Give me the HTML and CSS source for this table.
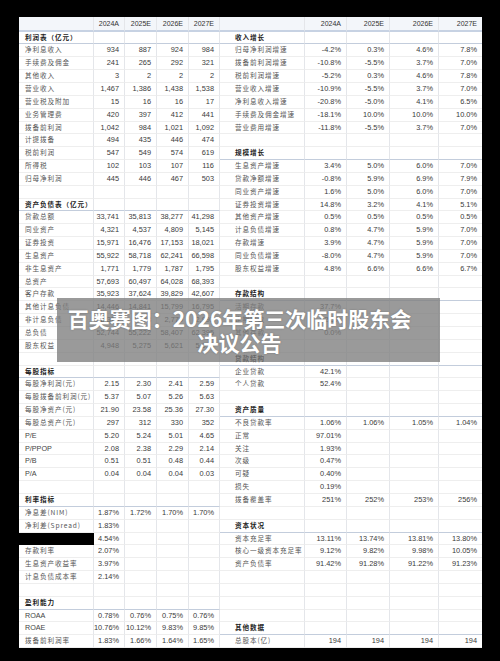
FILE: index.html
```html
<!DOCTYPE html>
<html lang="zh">
<head>
<meta charset="utf-8">
<link rel="stylesheet" href="styles.css">
</head>
<body>
<div class="sheet">
  <div class="r h"><span></span><span>2024A</span><span>2025E</span><span>2026E</span><span>2027E</span><span></span><span>2024A</span><span>2025E</span><span>2026E</span><span>2027E</span></div>
  <div class="r ls rs"><span class="l s">利润表（亿元）</span><span></span><span></span><span></span><span></span><span class="rl s">收入增长</span><span></span><span></span><span></span><span></span></div>
  <div class="r"><span class="l">净利息收入</span><span>934</span><span>887</span><span>924</span><span>984</span><span class="rl">归母净利润增速</span><span>-4.2%</span><span>0.3%</span><span>4.6%</span><span>7.8%</span></div>
  <div class="r"><span class="l">手续费及佣金</span><span>241</span><span>265</span><span>292</span><span>321</span><span class="rl">拨备前利润增速</span><span>-10.8%</span><span>-5.5%</span><span>3.7%</span><span>7.0%</span></div>
  <div class="r"><span class="l">其他收入</span><span>3</span><span>2</span><span>2</span><span>2</span><span class="rl">税前利润增速</span><span>-5.2%</span><span>0.3%</span><span>4.6%</span><span>7.8%</span></div>
  <div class="r"><span class="l">营业收入</span><span>1,467</span><span>1,386</span><span>1,438</span><span>1,538</span><span class="rl">营业收入增速</span><span>-10.9%</span><span>-5.5%</span><span>3.7%</span><span>7.0%</span></div>
  <div class="r"><span class="l">营业税及附加</span><span>15</span><span>16</span><span>16</span><span>17</span><span class="rl">净利息收入增速</span><span>-20.8%</span><span>-5.0%</span><span>4.1%</span><span>6.5%</span></div>
  <div class="r"><span class="l">业务管理费</span><span>420</span><span>397</span><span>412</span><span>441</span><span class="rl">手续费及佣金增速</span><span>-18.1%</span><span>10.0%</span><span>10.0%</span><span>10.0%</span></div>
  <div class="r"><span class="l">拨备前利润</span><span>1,042</span><span>984</span><span>1,021</span><span>1,092</span><span class="rl">营业费用增速</span><span>-11.8%</span><span>-5.5%</span><span>3.7%</span><span>7.0%</span></div>
  <div class="r"><span class="l">计提拨备</span><span>494</span><span>435</span><span>446</span><span>474</span><span class="rl"></span><span></span><span></span><span></span><span></span></div>
  <div class="r rs"><span class="l">税前利润</span><span>547</span><span>549</span><span>574</span><span>619</span><span class="rl s">规模增长</span><span></span><span></span><span></span><span></span></div>
  <div class="r"><span class="l">所得税</span><span>102</span><span>103</span><span>107</span><span>116</span><span class="rl">生息资产增速</span><span>3.4%</span><span>5.0%</span><span>6.0%</span><span>7.0%</span></div>
  <div class="r"><span class="l">归母净利润</span><span>445</span><span>446</span><span>467</span><span>503</span><span class="rl">贷款净额增速</span><span>-0.8%</span><span>5.9%</span><span>6.9%</span><span>7.9%</span></div>
  <div class="r"><span class="l"></span><span></span><span></span><span></span><span></span><span class="rl">同业资产增速</span><span>1.6%</span><span>5.0%</span><span>6.0%</span><span>7.0%</span></div>
  <div class="r ls"><span class="l s">资产负债表（亿元）</span><span></span><span></span><span></span><span></span><span class="rl">证券投资增速</span><span>14.8%</span><span>3.2%</span><span>4.1%</span><span>5.1%</span></div>
  <div class="r"><span class="l">贷款总额</span><span>33,741</span><span>35,813</span><span>38,277</span><span>41,298</span><span class="rl">其他资产增速</span><span>0.5%</span><span>0.5%</span><span>0.5%</span><span>0.5%</span></div>
  <div class="r"><span class="l">同业资产</span><span>4,321</span><span>4,537</span><span>4,809</span><span>5,145</span><span class="rl">计息负债增速</span><span>0.8%</span><span>4.7%</span><span>5.9%</span><span>7.0%</span></div>
  <div class="r"><span class="l">证券投资</span><span>15,971</span><span>16,476</span><span>17,153</span><span>18,021</span><span class="rl">存款增速</span><span>3.9%</span><span>4.7%</span><span>5.9%</span><span>7.0%</span></div>
  <div class="r"><span class="l">生息资产</span><span>55,922</span><span>58,718</span><span>62,241</span><span>66,598</span><span class="rl">同业负债增速</span><span>-8.0%</span><span>4.7%</span><span>5.9%</span><span>7.0%</span></div>
  <div class="r"><span class="l">非生息资产</span><span>1,771</span><span>1,779</span><span>1,787</span><span>1,795</span><span class="rl">股东权益增速</span><span>4.8%</span><span>6.6%</span><span>6.6%</span><span>6.7%</span></div>
  <div class="r"><span class="l">总资产</span><span>57,693</span><span>60,497</span><span>64,028</span><span>68,393</span><span class="rl"></span><span></span><span></span><span></span><span></span></div>
  <div class="r rs"><span class="l">客户存款</span><span>35,923</span><span>37,624</span><span>39,829</span><span>42,607</span><span class="rl s">存款结构</span><span></span><span></span><span></span><span></span></div>
  <div class="r"><span class="l">其他计息负债</span><span>14,446</span><span>14,841</span><span>15,799</span><span>16,795</span><span class="rl">活期存款</span><span>37.7%</span><span></span><span></span><span></span></div>
  <div class="r"><span class="l">非计息负债</span><span>2,375</span><span>2,758</span><span>2,779</span><span>2,993</span><span class="rl">定期存款</span><span>62.3%</span><span></span><span></span><span></span></div>
  <div class="r"><span class="l">总负债</span><span>52,744</span><span>55,222</span><span>58,407</span><span>62,395</span><span class="rl">其他存款</span><span>0.0%</span><span></span><span></span><span></span></div>
  <div class="r"><span class="l">股东权益</span><span>4,948</span><span>5,275</span><span>5,621</span><span>5,998</span><span class="rl"></span><span></span><span></span><span></span><span></span></div>
  <div class="r rs"><span class="l"></span><span></span><span></span><span></span><span></span><span class="rl s">贷款结构</span><span></span><span></span><span></span><span></span></div>
  <div class="r ls"><span class="l s">每股指标</span><span></span><span></span><span></span><span></span><span class="rl">企业贷款</span><span>42.1%</span><span></span><span></span><span></span></div>
  <div class="r"><span class="l">每股净利润(元)</span><span>2.15</span><span>2.30</span><span>2.41</span><span>2.59</span><span class="rl">个人贷款</span><span>52.4%</span><span></span><span></span><span></span></div>
  <div class="r"><span class="l">每股拨备前利润(元)</span><span>5.37</span><span>5.07</span><span>5.26</span><span>5.63</span><span class="rl"></span><span></span><span></span><span></span><span></span></div>
  <div class="r rs"><span class="l">每股净资产(元)</span><span>21.90</span><span>23.58</span><span>25.36</span><span>27.30</span><span class="rl s">资产质量</span><span></span><span></span><span></span><span></span></div>
  <div class="r"><span class="l">每股总资产(元)</span><span>297</span><span>312</span><span>330</span><span>352</span><span class="rl">不良贷款率</span><span>1.06%</span><span>1.06%</span><span>1.05%</span><span>1.04%</span></div>
  <div class="r"><span class="l lat">P/E</span><span>5.20</span><span>5.24</span><span>5.01</span><span>4.65</span><span class="rl">正常</span><span>97.01%</span><span></span><span></span><span></span></div>
  <div class="r"><span class="l lat">P/PPOP</span><span>2.08</span><span>2.38</span><span>2.29</span><span>2.14</span><span class="rl">关注</span><span>1.93%</span><span></span><span></span><span></span></div>
  <div class="r"><span class="l lat">P/B</span><span>0.51</span><span>0.51</span><span>0.48</span><span>0.44</span><span class="rl">次级</span><span>0.47%</span><span></span><span></span><span></span></div>
  <div class="r"><span class="l lat">P/A</span><span>0.04</span><span>0.04</span><span>0.04</span><span>0.03</span><span class="rl">可疑</span><span>0.40%</span><span></span><span></span><span></span></div>
  <div class="r"><span class="l"></span><span></span><span></span><span></span><span></span><span class="rl">损失</span><span>0.19%</span><span></span><span></span><span></span></div>
  <div class="r ls"><span class="l s">利率指标</span><span></span><span></span><span></span><span></span><span class="rl">拨备覆盖率</span><span>251%</span><span>252%</span><span>253%</span><span>256%</span></div>
  <div class="r"><span class="l">净息差(NIM)</span><span>1.87%</span><span>1.72%</span><span>1.70%</span><span>1.70%</span><span class="rl"></span><span></span><span></span><span></span><span></span></div>
  <div class="r rs"><span class="l">净利差(Spread)</span><span>1.83%</span><span></span><span></span><span></span><span class="rl s">资本状况</span><span></span><span></span><span></span><span></span></div>
  <div class="r"><span class="l red"></span><span>4.54%</span><span></span><span></span><span></span><span class="rl">资本充足率</span><span>13.11%</span><span>13.74%</span><span>13.81%</span><span>13.80%</span></div>
  <div class="r"><span class="l">存款利率</span><span>2.07%</span><span></span><span></span><span></span><span class="rl">核心一级资本充足率</span><span>9.12%</span><span>9.82%</span><span>9.98%</span><span>10.05%</span></div>
  <div class="r"><span class="l">生息资产收益率</span><span>3.97%</span><span></span><span></span><span></span><span class="rl">资产负债率</span><span>91.42%</span><span>91.28%</span><span>91.22%</span><span>91.23%</span></div>
  <div class="r"><span class="l">计息负债成本率</span><span>2.14%</span><span></span><span></span><span></span><span class="rl"></span><span></span><span></span><span></span><span></span></div>
  <div class="r"><span class="l"></span><span></span><span></span><span></span><span></span><span class="rl"></span><span></span><span></span><span></span><span></span></div>
  <div class="r ls"><span class="l s">盈利能力</span><span></span><span></span><span></span><span></span><span class="rl"></span><span></span><span></span><span></span><span></span></div>
  <div class="r"><span class="l lat">ROAA</span><span>0.78%</span><span>0.76%</span><span>0.75%</span><span>0.76%</span><span class="rl"></span><span></span><span></span><span></span><span></span></div>
  <div class="r rs"><span class="l lat">ROAE</span><span>10.76%</span><span>10.12%</span><span>9.83%</span><span>9.85%</span><span class="rl s">其他数据</span><span></span><span></span><span></span><span></span></div>
  <div class="r"><span class="l">拨备前利润率</span><span>1.83%</span><span>1.66%</span><span>1.64%</span><span>1.65%</span><span class="rl">总股本(亿)</span><span>194</span><span>194</span><span>194</span><span>194</span></div>

  <div class="banner">
    <div class="banner-text">百奥赛图：2026年第三次临时股东会<br>决议公告</div>
  </div>
</div>
</body>
</html>
```

FILE: styles.css
```css
html, body {
  margin: 0;
  padding: 0;
  background: #000;
}
body {
  width: 500px;
  height: 661px;
  overflow: hidden;
}
.sheet {
  position: relative;
  margin: 17px 0 0 19px;
  width: 463px;
  background: #fff;
}
.r {
  display: grid;
  grid-template-columns: 75px 31px 32px 32px 31px 85px 42px 43px 49px 43px;
  height: 12.85px;
}
.r > span {
  box-sizing: border-box;
  border-right: 1px solid #e4e6ea;
  border-bottom: 1px solid #eeeeee;
  font-family: "Liberation Sans", Arial, sans-serif;
  font-size: 7.4px;
  line-height: 11.8px;
  color: #3a3a3a;
  text-align: right;
  padding-right: 5px;
  white-space: nowrap;
  overflow: hidden;
}
.r > span:last-child {
  border-right: none;
}
.r.h {
  height: 14.6px;
  background: #f3f6fa;
}
.r.h > span {
  line-height: 13px;
  border-bottom: 2px solid #c7d2e3;
  font-size: 7px;
  color: #333;
}
.r.ls > span:nth-child(-n+5),
.r.rs > span:nth-child(n+6) {
  border-bottom: 1.5px solid #c3cddc;
}
.r > span.l,
.r > span.rl {
  text-align: left;
  font-family: "Noto Sans CJK SC", "Noto Sans", sans-serif;
  font-size: 6.6px;
  letter-spacing: 0.9px;
  color: #555;
  padding-right: 0;
}
.r > span.l {
  padding-left: 6px;
}
.r > span.rl {
  padding-left: 15px;
}
.r > span.lat {
  font-family: "Liberation Sans", Arial, sans-serif;
  font-size: 7.2px;
  letter-spacing: 0;
  color: #444;
}
.r > span.s {
  font-weight: bold;
  color: #222;
}
.r > span.red {
  background: #000;
  border-color: #000;
}
.banner {
  position: absolute;
  left: 38px;
  top: 281px;
  width: 383px;
  height: 64px;
  background: rgba(125, 125, 125, 0.78);
  display: flex;
  align-items: center;
  justify-content: center;
}
.banner-text {
  font-family: "Noto Sans CJK SC", "Noto Sans", sans-serif;
  font-weight: bold;
  font-size: 21px;
  line-height: 24px;
  color: #fff;
  text-align: center;
  padding-right: 18px;
  text-shadow: 0 0 2px rgba(0, 0, 0, 0.25);
}
```
